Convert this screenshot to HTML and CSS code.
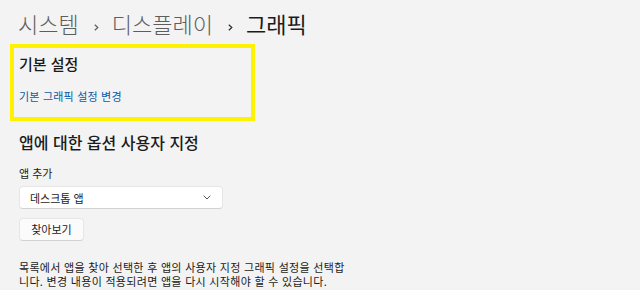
FILE: index.html
```html
<!DOCTYPE html>
<html lang="ko">
<head>
    <meta charset="UTF-8">
    <title>그래픽</title>
    <link rel="stylesheet" href="styles.css">
</head>
<body>
<div class="page">
    <div class="crumbs">
        <span class="crumb">시스템</span>
        <svg class="sep" width="5" height="7" viewBox="0 0 5 7"><polyline points="0.8,0.8 3.8,3.5 0.8,6.2" fill="none" stroke="#5d5d5d" stroke-width="1.2"/></svg>
        <span class="crumb">디스플레이</span>
        <svg class="sep" width="5" height="7" viewBox="0 0 5 7"><polyline points="0.8,0.8 3.8,3.5 0.8,6.2" fill="none" stroke="#2b2b2b" stroke-width="1.2"/></svg>
        <span class="crumb current">그래픽</span>
    </div>

    <div class="hilite">
        <div class="boxTitle">기본 설정</div>
        <a class="link" href="javascript:;">기본 그래픽 설정 변경</a>
    </div>

    <div class="subTitle">앱에 대한 옵션 사용자 지정</div>
    <div class="label">앱 추가</div>
    <div class="select">
        <span>데스크톱 앱</span>
        <svg width="8" height="5" viewBox="0 0 8 5"><polyline points="0.7,0.7 4,4 7.3,0.7" fill="none" stroke="#555" stroke-width="1"/></svg>
    </div>
    <div class="btn">찾아보기</div>
    <p class="desc">목록에서 앱을 찾아 선택한 후 앱의 사용자 지정 그래픽 설정을 선택합니다. 변경 내용이 적용되려면 앱을 다시 시작해야 할 수 있습니다.</p>
</div>
</body>
</html>
```

FILE: styles.css
```css
* {
    margin: 0;
    padding: 0;
    box-sizing: border-box;
}

body {
    background: #f3f3f3;
    color: #1b1b1b;
    font-family: "Noto Sans CJK KR", "Noto Sans", sans-serif;
    width: 640px;
    height: 290px;
    overflow: hidden;
}

.page {
    padding: 8px 0 0 18px;
}

/* 경로 */
.crumbs {
    display: flex;
    align-items: center;
    height: 30px;
    font-size: 22px;
    font-weight: 300;
    line-height: 30px;
    color: #5d5d5d;
}

.sep {
    margin: 8px 13px 0 15px;
}

.crumb.current {
    color: #1b1b1b;
    font-weight: 400;
}

/* 노란 박스 */
.hilite {
    width: 245px;
    height: 77px;
    margin: 6px 0 0 -8px;
    padding: 6px 0 0 5px;
    border: 4px solid #fff200;
}

.boxTitle {
    font-size: 15px;
    font-weight: 500;
    line-height: 20px;
}

.link {
    display: block;
    margin-top: 14px;
    font-size: 11px;
    line-height: 16px;
    color: #0a5aa8;
    text-decoration: none;
    letter-spacing: 0.2px;
}

.subTitle {
    margin-top: 10px;
    margin-left: 1px;
    font-size: 16px;
    font-weight: 500;
    line-height: 22px;
}

.label {
    margin-top: 12px;
    margin-left: 1px;
    font-size: 11px;
    line-height: 16px;
}

.select {
    display: flex;
    align-items: center;
    justify-content: space-between;
    width: 204px;
    height: 23px;
    margin-top: 5px;
    margin-left: 1px;
    padding: 0 11px 0 10px;
    background: #fff;
    border: 1px solid #e6e6e6;
    border-bottom-color: #d2d2d2;
    border-radius: 4px;
    font-size: 11px;
}

.btn {
    width: 65px;
    height: 23px;
    margin-top: 9px;
    margin-left: 1px;
    background: #fbfbfb;
    border: 1px solid #e6e6e6;
    border-bottom-color: #d2d2d2;
    border-radius: 4px;
    font-size: 11px;
    line-height: 21px;
    text-align: center;
}

.desc {
    width: 332px;
    margin-top: 19px;
    margin-left: 1px;
    font-size: 11px;
    line-height: 14px;
    letter-spacing: 0.3px;
}
```
